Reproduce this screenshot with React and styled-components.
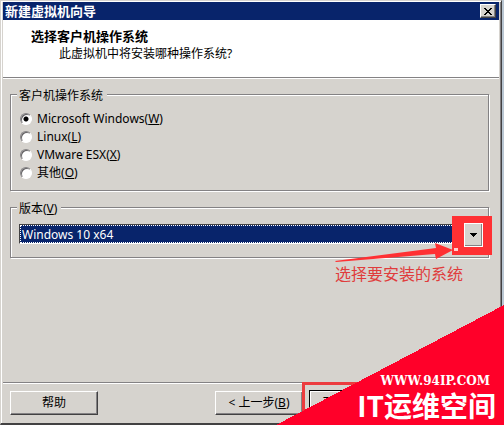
import React, { useState } from 'react'
import styled, { createGlobalStyle, css } from 'styled-components'

const GlobalStyle = createGlobalStyle`
  * {
    box-sizing: border-box;
  }

  body {
    margin: 0;
    background-color: #B9C6D2;
    color: #000000;
    font: 12px/18px 'Noto Sans', 'Noto Sans CJK SC', sans-serif;
  }
`

const Page = styled.div`
  position: relative;
  display: flex;
  min-height: 100vh;
  padding-right: 2px;
`

const Window = styled.div`
  flex: 1;
  display: flex;
  flex-direction: column;
  background-color: #D6D3CE;
  border-style: solid;
  border-width: 1px 1px 2px;
  border-color: #D6D3CE #424142 #424142 #D6D3CE;
  box-shadow: inset 1px 1px #FFFFFF, inset -1px 0 #848284;
  padding: 1px 2px 0;
`

const TitleBar = styled.header`
  display: flex;
  justify-content: space-between;
  align-items: center;
  height: 18px;
  padding: 0 3px 0 2px;
  background-color: #08246B;
  color: #FFFFFF;
  font-size: 13px;
  font-weight: bold;
`

const raised = css`
  background-color: #D6D3CE;
  border: 1px solid;
  border-color: #FFFFFF #424142 #424142 #FFFFFF;
  border-radius: 0;
  box-shadow: inset -1px -1px #848284;
  color: #000000;
  font: inherit;
`

const CloseButton = styled.button`
  ${raised}
  display: flex;
  align-items: center;
  justify-content: center;
  width: 16px;
  height: 14px;
  padding: 0;
`

const Intro = styled.div`
  height: 58px;
  padding: 7px 28px 0;
  background-color: #FFFFFF;
  border-bottom: 1px solid #848284;
`

const Heading = styled.h1`
  margin: 0;
  font-size: 13px;
  line-height: 18px;
`

const Question = styled.p`
  margin: 0;
  padding-left: 28px;
`

const Content = styled.main`
  flex: 1;
  display: flex;
  flex-direction: column;
  gap: 5px;
  padding: 4px 10px 0 7px;
  border-top: 1px solid #FFFFFF;
`

const Group = styled.fieldset`
  position: relative;
  min-width: 0;
  margin: 0;
  padding: ${props => props.$compact ? '6px 7px 13px 8px' : '5px 8px 8px'};
  border: 1px solid #848284;
  box-shadow: 1px 1px #FFFFFF, inset 1px 1px #FFFFFF;
`

const Legend = styled.legend`
  margin-left: -2px;
  padding: 4px 4px 0 2px;
  background-color: #D6D3CE;
  line-height: 18px;
`

const Option = styled.label`
  display: flex;
  align-items: center;
  gap: 5px;
  height: 18px;
  padding-left: 1px;
`

const Radio = styled.input`
  appearance: none;
  width: 12px;
  height: 12px;
  margin: 0;
  border: 1px solid;
  border-color: #848284 #FFFFFF #FFFFFF #848284;
  border-radius: 50%;
  background-color: #FFFFFF;
  box-shadow: inset 1px 1px #636163;

  &:checked {
    background-image: radial-gradient(circle, #000000 2px, transparent 3px);
  }
`

const Combo = styled.div`
  position: relative;
  display: flex;
  height: 20px;
`

const Select = styled.select`
  appearance: none;
  flex: 1;
  min-width: 0;
  padding: 1px 2px 0;
  border: 1px solid;
  border-color: #424142 #FFFFFF #FFFFFF #424142;
  border-radius: 0;
  outline: 1px dotted #FFFFFF;
  outline-offset: -2px;
  background-color: #08246B;
  color: #FFFFFF;
  font: inherit;
`

const Highlight = styled.div`
  position: absolute;
  top: -8px;
  right: -11px;
  display: flex;
  width: 40px;
  height: 39px;
  padding: 7px 9px 8px 12px;
  background-color: #FF3033;
`

const DropButton = styled.button`
  ${raised}
  display: flex;
  align-items: center;
  justify-content: center;
  flex: 1;
  padding: 0;
  outline: 1px solid #FFFFFF;
  outline-offset: -1px;
`

const Note = styled.div`
  position: absolute;
  top: 38px;
  right: 18px;
  color: #E03C3C;
  font-size: 16px;
  line-height: 24px;
  white-space: nowrap;
`

const Arrow = styled.svg`
  position: absolute;
  top: 18px;
  right: 20px;
`

const Footer = styled.footer`
  display: flex;
  justify-content: space-between;
  height: 41px;
  margin: 0 -1px 0 0;
  padding: 8px 0 0 7px;
  border-top: 1px solid #848284;
  box-shadow: inset 0 1px #FFFFFF;
`

const Steps = styled.div`
  display: flex;
  gap: 7px;
  padding-right: 102px;
`

const Button = styled.button`
  ${raised}
  position: relative;
  width: 88px;
  height: 24px;
  padding: 0;
  outline: ${props => props.$primary ? '1px solid #000000' : 'none'};
`

const NextFrame = styled.span`
  position: absolute;
  top: -10px;
  left: -9px;
  width: 106px;
  height: 42px;
  border: 3px solid #EC3B3E;
`

const Ribbon = styled.div`
  position: absolute;
  right: 0;
  bottom: 0;
  display: flex;
  flex-direction: column;
  align-items: flex-end;
  justify-content: flex-end;
  width: 228px;
  height: 120px;
  padding: 0 8px 4px 0;
  background: linear-gradient(to bottom right, transparent 50%, #FF0029 50%);
  color: #FFFFFF;
  font-weight: bold;
`

const Site = styled.div`
  padding-right: 6px;
  font-family: 'DejaVu Serif', serif;
  font-size: 12px;
  line-height: 16px;
`

const Brand = styled.div`
  font-family: 'Noto Sans CJK SC', sans-serif;
  font-size: 28px;
  line-height: 32px;
  white-space: nowrap;
`

const systems = [
  { id: 'windows', name: 'Microsoft Windows', accessKey: 'W' },
  { id: 'linux', name: 'Linux', accessKey: 'L' },
  { id: 'esx', name: 'VMware ESX', accessKey: 'X' },
  { id: 'other', name: '其他', accessKey: 'O' },
]

export default function App() {
  const [system, setSystem] = useState('windows')

  return (
    <Page>
      <GlobalStyle />
      <Window>
        <TitleBar>
          <span>新建虚拟机向导</span>
          <CloseButton aria-label="关闭">
            <svg width="8" height="7" viewBox="0 0 8 7" shapeRendering="crispEdges">
              <path d="M0 0h2v1h1v1h2v-1h1v-1h2v1h-1v1h-1v1h-1v1h1v1h1v1h1v1h-2v-1h-1v-1h-2v1h-1v1h-2v-1h1v-1h1v-1h1v-1h-1v-1h-1v-1h-1z" />
            </svg>
          </CloseButton>
        </TitleBar>
        <Intro>
          <Heading>选择客户机操作系统</Heading>
          <Question>此虚拟机中将安装哪种操作系统?</Question>
        </Intro>
        <Content>
          <Group>
            <Legend>客户机操作系统</Legend>
            {systems.map(({ id, name, accessKey }) => (
              <Option key={id}>
                <Radio
                  type="radio"
                  name="system"
                  checked={system === id}
                  onChange={() => setSystem(id)}
                />
                <span>{name}(<u>{accessKey}</u>)</span>
              </Option>
            ))}
          </Group>
          <Group $compact>
            <Legend><label htmlFor="version">版本(<u>V</u>)</label></Legend>
            <Combo>
              <Select id="version">
                <option>Windows 10 x64</option>
              </Select>
              <Highlight>
                <DropButton aria-label="展开">
                  <svg width="7" height="4" viewBox="0 0 7 4" shapeRendering="crispEdges">
                    <path d="M0 0h7v1h-1v1h-1v1h-1v1h-1v-1h-1v-1h-1v-1h-1z" />
                  </svg>
                </DropButton>
              </Highlight>
              <Arrow width="126" height="22" viewBox="0 0 126 22">
                <path d="M0 19L101 6L100 1L118 8L101 17L100 12L1 20z" fill="#FF3033" />
                <path d="M119 6h4v3h-4z" fill="#FFD0D0" />
              </Arrow>
              <Note>选择要安装的系统</Note>
            </Combo>
          </Group>
        </Content>
        <Footer>
          <Button>帮助</Button>
          <Steps>
            <Button>&lt; 上一步(<u>B</u>)</Button>
            <Button $primary>
              下一步(<u>N</u>) &gt;
              <NextFrame />
            </Button>
          </Steps>
        </Footer>
      </Window>
      <Ribbon>
        <Site>WWW.94IP.COM</Site>
        <Brand>IT运维空间</Brand>
      </Ribbon>
    </Page>
  )
}
